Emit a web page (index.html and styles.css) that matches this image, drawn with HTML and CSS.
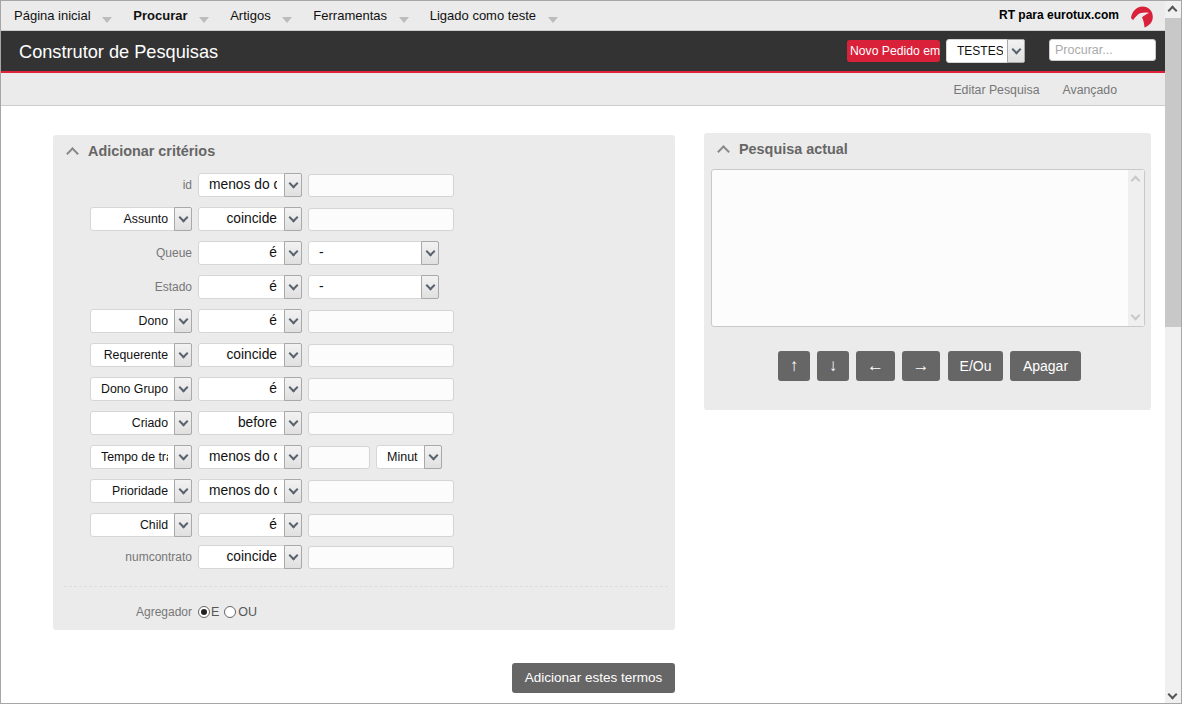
FILE: index.html
```html
<!DOCTYPE html>
<html lang="pt">
<head>
<meta charset="utf-8">
<title>Construtor de Pesquisas</title>
<link rel="stylesheet" href="styles.css">
</head>
<body>
<div class="window">
  <div class="page">
    <nav class="menu">
      <ul class="menu-list">
        <li class="menu-item">Página inicial</li>
        <li class="menu-item menu-active">Procurar</li>
        <li class="menu-item">Artigos</li>
        <li class="menu-item">Ferramentas</li>
        <li class="menu-item">Ligado como teste</li>
      </ul>
      <div class="brand">
        <span class="brand-text">RT para eurotux.com</span>
        <svg class="logo" viewBox="0 0 22 22" width="22" height="22"><path d="M0 11.5C1.5 4.5 6 0.5 11.5 0.5C17.5 0.5 21.8 5 21.8 11C21.8 16 18.5 19.5 13.5 21.5C13.2 17.5 12.5 14 11 11.5C13 9.5 15.5 8 18 7C14.5 6 9 6.5 6.5 9C4.8 10.5 3.2 12.5 2.2 14C1.2 13.6 0.4 12.8 0 11.5Z" fill="#d9213a"/></svg>
      </div>
    </nav>
    <header class="header">
      <h1 class="title">Construtor de Pesquisas</h1>
      <div class="header-tools">
        <span class="new-ticket">Novo Pedido em</span>
        <div class="sel sel-queue"><span class="sel-text">TESTES</span><span class="sel-arrow"></span></div>
        <div class="search">Procurar...</div>
      </div>
    </header>
    <div class="subnav">
      <a class="subnav-link">Editar Pesquisa</a>
      <a class="subnav-link">Avançado</a>
    </div>
    <main class="content">
      <div class="left">
        <section class="panel panel-left">
          <h2 class="panel-title">Adicionar critérios</h2>
          <div class="rows">
            <div class="row"><span class="label">id</span><div class="sel w2"><span class="sel-text">menos do que</span><span class="sel-arrow"></span></div><div class="inp"></div></div>
            <div class="row"><div class="sel w1"><span class="sel-text">Assunto</span><span class="sel-arrow"></span></div><div class="sel w2"><span class="sel-text">coincide</span><span class="sel-arrow"></span></div><div class="inp"></div></div>
            <div class="row"><span class="label">Queue</span><div class="sel w2"><span class="sel-text">é</span><span class="sel-arrow"></span></div><div class="sel w3"><span class="sel-text">-</span><span class="sel-arrow"></span></div></div>
            <div class="row"><span class="label">Estado</span><div class="sel w2"><span class="sel-text">é</span><span class="sel-arrow"></span></div><div class="sel w3"><span class="sel-text">-</span><span class="sel-arrow"></span></div></div>
            <div class="row"><div class="sel w1"><span class="sel-text">Dono</span><span class="sel-arrow"></span></div><div class="sel w2"><span class="sel-text">é</span><span class="sel-arrow"></span></div><div class="inp"></div></div>
            <div class="row"><div class="sel w1"><span class="sel-text">Requerente</span><span class="sel-arrow"></span></div><div class="sel w2"><span class="sel-text">coincide</span><span class="sel-arrow"></span></div><div class="inp"></div></div>
            <div class="row"><div class="sel w1"><span class="sel-text">Dono Grupo</span><span class="sel-arrow"></span></div><div class="sel w2"><span class="sel-text">é</span><span class="sel-arrow"></span></div><div class="inp"></div></div>
            <div class="row"><div class="sel w1"><span class="sel-text">Criado</span><span class="sel-arrow"></span></div><div class="sel w2"><span class="sel-text">before</span><span class="sel-arrow"></span></div><div class="inp"></div></div>
            <div class="row"><div class="sel w1"><span class="sel-text">Tempo de trabalho</span><span class="sel-arrow"></span></div><div class="sel w2"><span class="sel-text">menos do que</span><span class="sel-arrow"></span></div><div class="inp inp-small"></div><div class="sel w4"><span class="sel-text">Minutos</span><span class="sel-arrow"></span></div></div>
            <div class="row"><div class="sel w1"><span class="sel-text">Prioridade</span><span class="sel-arrow"></span></div><div class="sel w2"><span class="sel-text">menos do que</span><span class="sel-arrow"></span></div><div class="inp"></div></div>
            <div class="row"><div class="sel w1"><span class="sel-text">Child</span><span class="sel-arrow"></span></div><div class="sel w2"><span class="sel-text">é</span><span class="sel-arrow"></span></div><div class="inp"></div></div>
            <div class="row row-last"><span class="label">numcontrato</span><div class="sel w2"><span class="sel-text">coincide</span><span class="sel-arrow"></span></div><div class="inp"></div></div>
          </div>
          <div class="aggregator">
            <span class="label">Agregador</span>
            <span class="radios">
              <span class="radio radio-on"></span><span class="radio-label">E</span>
              <span class="radio radio-second"></span><span class="radio-label radio-label-second">OU</span>
            </span>
          </div>
        </section>
        <div class="submit-row"><button class="btn btn-submit">Adicionar estes termos</button></div>
      </div>
      <section class="panel panel-right">
        <h2 class="panel-title">Pesquisa actual</h2>
        <div class="listbox">
          <div class="listbox-scroll"><span class="chev chev-up"></span><span class="chev chev-down"></span></div>
        </div>
        <div class="actions">
          <button class="btn btn-a">↑</button>
          <button class="btn btn-a">↓</button>
          <button class="btn btn-b">←</button>
          <button class="btn btn-c">→</button>
          <button class="btn btn-d">E/Ou</button>
          <button class="btn btn-e">Apagar</button>
        </div>
      </section>
    </main>
  </div>
  <div class="scrollbar">
    <span class="scroll-btn"><span class="chev chev-up chev-dark"></span></span>
    <span class="scroll-thumb"></span>
    <span class="scroll-track"></span>
    <span class="scroll-btn"><span class="chev chev-down chev-dark"></span></span>
  </div>
</div>
</body>
</html>
```
FILE: styles.css
```css
* { box-sizing: border-box; }
html, body { margin: 0; padding: 0; height: 704px; overflow: hidden; background: #fff; }
body { font-family: "Liberation Sans", Arial, sans-serif; font-size: 12px; color: #000; }
.window { display: flex; width: 1182px; height: 704px; border: 1px solid #a6a6a6; overflow: hidden; }
.page { width: 1164px; flex: none; display: flex; flex-direction: column; }

.menu { height: 30px; flex: none; background: #ebebeb; border-bottom: 1px solid #ccc; display: flex; justify-content: space-between; padding-left: 13px; }
.menu-list { list-style: none; margin: 0; padding: 0; display: flex; }
.menu-item { position: relative; font-size: 13px; line-height: 29px; padding-right: 42.7px; color: #111; }
.menu-item::after { content: ""; position: absolute; right: 21px; top: 16px; border-left: 5px solid transparent; border-right: 5px solid transparent; border-top: 6px solid #bcbcbc; }
.menu-active { font-weight: bold; }
.brand { display: flex; padding-right: 12px; }
.brand-text { font-size: 12px; font-weight: bold; line-height: 29px; margin-right: 12px; }
.logo { margin-top: 5px; }

.header { height: 42px; flex: none; background: #333; border-bottom: 2px solid #e0213a; display: flex; justify-content: space-between; padding: 8px 9px 0 18px; }
.title { margin: 0; color: #fff; font-size: 18.2px; font-weight: normal; line-height: 26px; }
.header-tools { display: flex; align-items: flex-start; }
.new-ticket { width: 93px; height: 22px; margin-top: 1px; background: #d9213a; border-radius: 3px; color: #fff; font-size: 12.2px; line-height: 22px; padding-left: 3px; white-space: nowrap; }
.search { width: 107px; height: 22px; background: #fff; border: 1px solid #ccc; border-radius: 3px; color: #aaa; font-size: 12.5px; line-height: 20px; padding-left: 5px; }

.subnav { height: 33px; flex: none; background: #ebebeb; border-bottom: 1px solid #ccc; display: flex; justify-content: flex-end; gap: 23px; padding-right: 48px; }
.subnav-link { color: #777; font-size: 12.3px; line-height: 34px; }

.content { flex: 1; display: flex; align-items: flex-start; padding: 27px 0 0 52px; }
.left { width: 622px; flex: none; margin-top: 2px; }
.panel { background: #ebebeb; border-radius: 3px; }
.panel-left { height: 495px; padding: 8px 7px 0 0; }
.panel-right { width: 447px; height: 277px; margin-left: 29px; padding: 8px 6px 0 7px; }
.panel-title { position: relative; margin: 0; color: #666; font-size: 14.4px; font-weight: bold; line-height: 17px; padding-left: 35px; }
.panel-title::before { content: ""; position: absolute; left: 15px; top: 6px; width: 7px; height: 7px; border-left: 2px solid #888; border-top: 2px solid #888; transform: rotate(45deg); }
.panel-right .panel-title { padding-left: 28px; }
.panel-right .panel-title::before { left: 8px; }

.rows { margin-top: 8px; padding-left: 37px; }
.row { display: flex; align-items: center; gap: 6px; height: 34px; }
.row-last { height: 30px; }
.label { width: 102px; flex: none; text-align: right; color: #777; font-size: 12px; }

.sel { display: flex; flex: none; height: 24px; background: #fff; border: 1px solid #d6d6d6; border-radius: 3px; }
.sel-text { flex: 1; min-width: 0; overflow: hidden; white-space: nowrap; text-align: right; font-size: 13.8px; line-height: 22px; margin: 0 7px 0 10px; color: #111; }
.sel-arrow { position: relative; width: 18px; flex: none; background: linear-gradient(#f2f2f2, #e0e0e0); border: 1px solid #a9a9a9; border-radius: 0 2px 2px 0; margin: -1px -1px -1px 0; }
.sel-arrow::after { content: ""; position: absolute; left: 5px; top: 6px; width: 5px; height: 5px; border-right: 2px solid #59636d; border-bottom: 2px solid #59636d; transform: rotate(45deg); }
.w1 { width: 102px; }
.w1 .sel-text { font-size: 12.3px; margin-right: 6px; line-height: 23px; }
.w2 { width: 104px; }
.w3 { width: 131px; }
.w3 .sel-text { text-align: left; }
.w4 { width: 66px; }
.w4 .sel-text { font-size: 12.5px; margin-right: 6px; }
.inp { width: 146px; height: 23px; margin-top: 1px; background: #fcfcfc; border: 1px solid #d4d4d4; border-radius: 3px; }
.inp-small { width: 62px; }
.sel-queue { width: 79px; margin-left: 6px; margin-right: 24px; }
.sel-queue .sel-text { font-size: 12px; margin-right: 4px; }

.aggregator { display: flex; align-items: center; gap: 6px; height: 16px; margin-top: 14px; margin-left: 11px; padding: 17px 0 0 26px; border-top: 1px dashed #ddd; box-sizing: content-box; }
.radios { display: flex; align-items: center; color: #555; font-size: 12.5px; }
.radio { position: relative; width: 12px; height: 12px; border: 1px solid #666; border-radius: 50%; background: #fff; }
.radio-on::after { content: ""; position: absolute; left: 2px; top: 2px; width: 6px; height: 6px; border-radius: 50%; background: #222; }
.radio-label { margin-left: 1px; }
.radio-second { margin-left: 5px; }
.radio-label-second { margin-left: 2px; }

.submit-row { display: flex; justify-content: flex-end; margin-top: 33px; }
.btn { height: 30px; padding: 0; border: 0; border-radius: 3px; background: #666; color: #fff; font-family: inherit; font-size: 14px; line-height: 28px; }
.btn-submit { width: 163px; font-size: 13.5px; }

.listbox { position: relative; height: 158px; margin-top: 11px; background: #fcfcfc; border: 1px solid #c9c9c9; border-radius: 3px; }
.listbox-scroll { position: absolute; top: 0; right: 0; bottom: 0; width: 16px; background: #efefef; }
.chev { position: absolute; left: 4px; width: 7px; height: 7px; border: solid #c8c8c8; border-width: 2px 0 0 2px; }
.chev-up { top: 7px; transform: rotate(45deg); }
.chev-down { bottom: 7px; transform: rotate(225deg); }
.chev-dark { border-color: #555; }

.actions { display: flex; margin-top: 24px; margin-left: 67px; gap: 7px; }
.btn-a { width: 32px; font-size: 17px; }
.btn-b { width: 39px; font-size: 17px; }
.btn-c { width: 38px; font-size: 17px; margin-right: 1px; }
.btn-d { width: 55px; }
.btn-e { width: 71px; }

.scrollbar { flex: 1; display: flex; flex-direction: column; background: #f0f0f0; }
.scroll-btn { position: relative; height: 17px; flex: none; }
.scroll-btn .chev { left: 4px; }
.scroll-btn .chev-up { top: 6px; }
.scroll-btn .chev-down { bottom: 5px; }
.scroll-thumb { height: 309px; flex: none; background: #c8c8c8; }
.scroll-track { flex: 1; }
```
